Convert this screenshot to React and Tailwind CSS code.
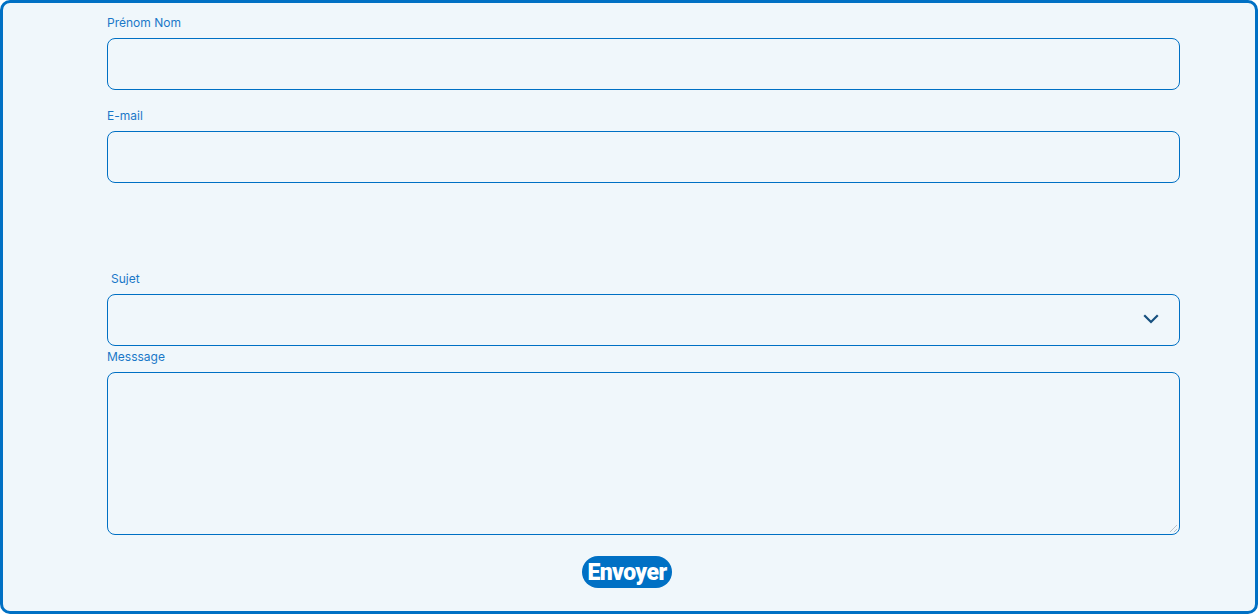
import React from "react";

function Label({ children, className = "" }) {
  return (
    <label className={`block text-[12px] leading-[16px] text-[#1a78c8] ${className}`}>
      {children}
    </label>
  );
}

export default function App() {
  return (
    <div className="w-[1258px] h-[614px] bg-white" style={{ fontFamily: "Inter, 'Noto Sans', sans-serif" }}>
      <form
        className="w-full h-full border-[3px] border-[#0070c4] rounded-[10px] bg-[#f0f7fb] flex flex-col"
        onSubmit={(e) => e.preventDefault()}
      >
        <div className="ml-[104px] w-[1073px] flex flex-col">
          <Label className="mt-[12px]">Prénom Nom</Label>
          <input
            type="text"
            className="mt-[7px] h-[52px] w-full rounded-[8px] border border-[#0070c4] bg-transparent outline-none"
          />
          <Label className="mt-[18px]">E-mail</Label>
          <input
            type="email"
            className="mt-[7px] h-[52px] w-full rounded-[8px] border border-[#0070c4] bg-transparent outline-none"
          />
          <Label className="mt-[88px] pl-[4px]">Sujet</Label>
          <div className="relative mt-[7px] h-[52px] w-full rounded-[8px] border border-[#0070c4]">
            <svg
              className="absolute right-[20px] top-[18px]"
              width="16"
              height="12"
              viewBox="0 0 16 12"
              fill="none"
            >
              <path d="M2 3l6 6 6-6" stroke="#17507f" strokeWidth="2.2" strokeLinecap="square" />
            </svg>
          </div>
          <Label className="mt-[3px]">Messsage</Label>
          <div className="relative mt-[7px] h-[163px] w-full">
            <textarea className="block h-full w-full rounded-[8px] border border-[#0070c4] bg-transparent outline-none resize-none" />
            <svg className="absolute right-[2px] bottom-[2px] pointer-events-none" width="10" height="10" viewBox="0 0 10 10">
              <path d="M9 2L2 9M9 6L6 9" stroke="#b8c0c8" strokeWidth="1" />
            </svg>
          </div>
        </div>
        <div className="flex justify-center mt-[21px] pr-[4px]">
          <button
            type="submit"
            className="h-[32px] w-[90px] rounded-full bg-[#0070c4] text-white text-[23px] font-black tracking-[-0.6px] leading-none flex items-center justify-center"
            style={{ fontFamily: "Roboto, 'Liberation Sans', sans-serif" }}
          >
            Envoyer
          </button>
        </div>
      </form>
    </div>
  );
}
